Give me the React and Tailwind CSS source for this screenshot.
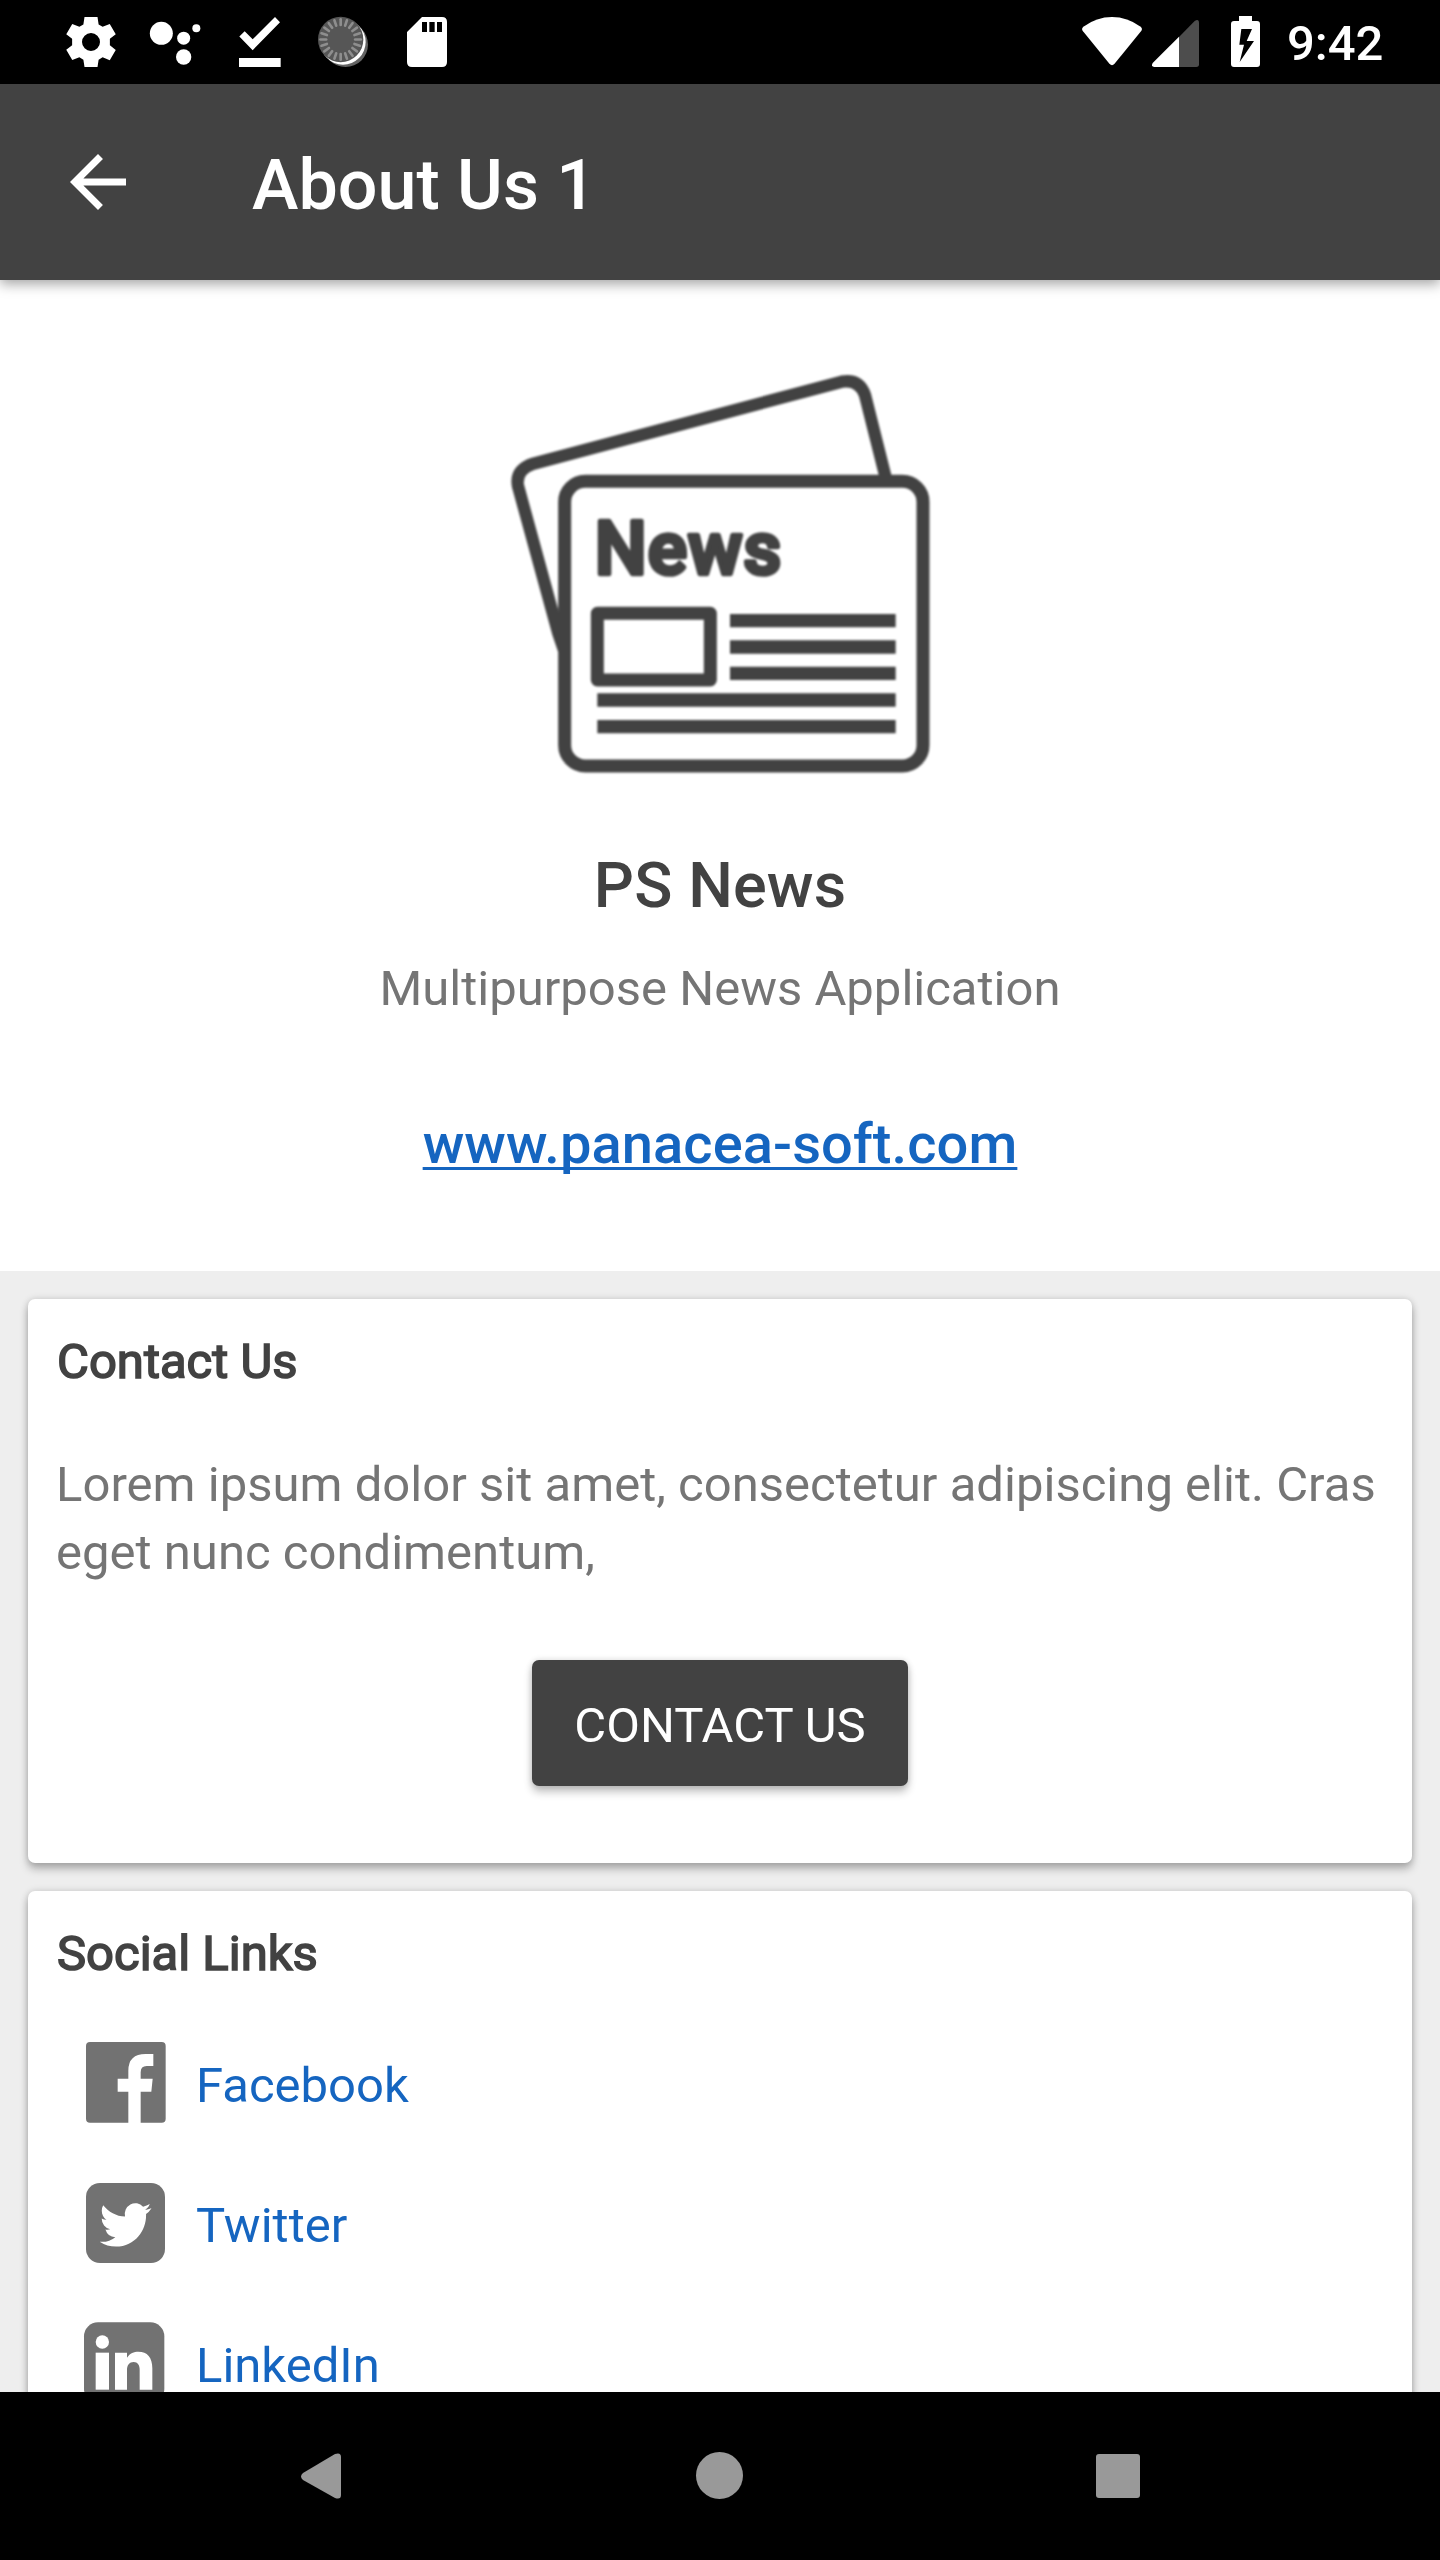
function Gear() {
  return (
    <svg className="size-[60px]" viewBox="0 0 24 24" fill="#fff">
      <path
        fillRule="evenodd"
        d="M9.4 2h5.2l.45 2.95 1.6.95 2.85-1.15 2.4 4.1-2.35 1.85v2.6l2.35 1.85-2.4 4.1-2.85-1.15-1.6.95L14.6 22H9.4l-.45-2.95-1.6-.95-2.85 1.15-2.4-4.1 2.35-1.85v-2.6L2.1 8.85l2.4-4.1L7.35 5.9l1.6-.95zM12 8.4a3.6 3.6 0 100 7.2 3.6 3.6 0 000-7.2z"
      />
    </svg>
  );
}

function Assistant() {
  return (
    <svg className="size-[60px]" viewBox="315 36 180 180" fill="#fff">
      <circle cx="364" cy="100" r="34.5" />
      <circle cx="431" cy="114.500" r="19.500" />
      <circle cx="469" cy="84.500" r="12" />
      <circle cx="431" cy="171" r="23" />
    </svg>
  );
}

function DownloadDone() {
  return (
    <svg className="size-[60px]" viewBox="567 36 180 180" fill="#fff">
      <path d="M598 109.500L614 94l24 24 67-67 15 15.500-82 84zM597 174h125v27H597z" />
    </svg>
  );
}

const ticks = Array.from({ length: 20 }, (_, i) => i * 18);

function Spinner() {
  return (
    <svg className="size-[60px]" viewBox="819 36 180 180">
      <circle cx="916.500" cy="133.500" r="67.500" fill="#636363" />
      <circle cx="909" cy="126" r="68" fill="#fff" />
      <circle cx="902" cy="118.500" r="68" fill="#565656" />
      {ticks.map((a) => (
        <path
          key={a}
          d="M902 75v-17"
          stroke="#8e8e8e"
          strokeWidth="8"
          strokeLinecap="round"
          transform={`rotate(${a} 902 118.500)`}
        />
      ))}
    </svg>
  );
}

function SdCard() {
  return (
    <svg className="size-[60px]" viewBox="1071 36 180 180" fill="#fff">
      <path
        fillRule="evenodd"
        d="M1146 51h60q15 0 15 15v120q0 15-15 15h-90q-15 0-15-15V96zM1146 66v30h15V66zM1168 66v30h16V66zM1191 66v30h15V66z"
      />
    </svg>
  );
}

function Wifi() {
  return (
    <svg className="h-[60px] w-[60px]" viewBox="66 36 180 180" fill="#fff">
      <path d="M70 80Q110 51 156 51T242 80Q249 86 243 94L163 192Q156 199 149 192L69 94Q63 86 70 80z" />
    </svg>
  );
}

function Signal() {
  return (
    <svg className="ml-[10px] h-[60px] w-12" viewBox="276 36 144 180">
      <path d="M357 111L404 63Q417 55 417 70V193Q417 201 409 201H357z" fill="#4d4d4d" />
      <path d="M357 110V201H283Q272 200 278 189z" fill="#fff" />
    </svg>
  );
}

function Battery() {
  return (
    <svg className="ml-[31px] h-[60px] w-[29px]" viewBox="513 36 87 180" fill="#fff">
      <path
        fillRule="evenodd"
        d="M537 48h39v15h15q9 0 9 9v120q0 9-9 9h-69q-9 0-9-9V72q0-9 9-9h15zM544 87l-6 47h14l-13 52 43-63h-22l16-36z"
      />
    </svg>
  );
}

function StatusBar() {
  return (
    <div className="flex h-[84px] items-start bg-black pt-3 pl-[61px]">
      <div className="flex gap-6">
        <Gear />
        <Assistant />
        <DownloadDone />
        <Spinner />
        <SdCard />
      </div>
      <div className="ml-[625px] flex">
        <Wifi />
        <Signal />
        <Battery />
        <span className="ml-[27px] pt-[3px] text-[49px] leading-[58px] font-medium text-white">9:42</span>
      </div>
    </div>
  );
}

function NewsLogo() {
  return (
    <svg
      className="h-[420px] w-[420px] blur-[0.9px]"
      viewBox="60 30 1260 1260"
      fill="none"
      stroke="#424242"
    >
      <path
        d="M1189 390L1125 135Q1108 86 1055 95L130 341Q75 360 84 408L205 850L222 900"
        strokeWidth="37"
      />
      <rect x="224" y="394" width="1075" height="854" rx="62" fill="#fff" strokeWidth="39" />
      <text
        x="314"
        y="671"
        textLength="560"
        lengthAdjust="spacing"
        fontFamily="Roboto, sans-serif"
        fontSize="220"
        fontWeight="500"
        fill="#424242"
        strokeWidth="14"
        strokeLinejoin="round"
      >
        News
      </text>
      <rect x="322" y="790" width="339" height="200" strokeWidth="39" strokeLinejoin="round" />
      <path d="M720 812h497M720 891h497M720 970h497M322 1050h895M322 1130h895" strokeWidth="40" />
    </svg>
  );
}

function FacebookIcon() {
  return (
    <svg className="size-20 overflow-visible" viewBox="258 606 240 240">
      <rect x="258" y="606" width="239" height="242" rx="12" fill="#727272" />
      <path
        d="M385 849V755H353V716H385V692Q385 642 437 642H460V678H440Q422 678 422 697V716H458L454 755H422V849z"
        fill="#fff"
      />
    </svg>
  );
}

function TwitterIcon() {
  return (
    <svg className="size-20 overflow-visible" viewBox="78 96 240 240">
      <rect x="78" y="99" width="237" height="240" rx="42" fill="#727272" />
      <path
        transform="translate(119 144.500) scale(6.460 6.680)"
        fill="#fff"
        d="M23.953 4.570a10 10 0 01-2.825.775 4.958 4.958 0 002.163-2.723c-.951.555-2.005.959-3.127 1.184a4.920 4.920 0 00-8.384 4.482C7.690 8.095 4.067 6.130 1.640 3.162a4.822 4.822 0 00-.666 2.475c0 1.710.870 3.213 2.188 4.096a4.904 4.904 0 01-2.228-.616v.060a4.923 4.923 0 003.946 4.827 4.996 4.996 0 01-2.212.085 4.936 4.936 0 004.604 3.417 9.867 9.867 0 01-6.102 2.105c-.390 0-.779-.023-1.170-.067a13.995 13.995 0 007.557 2.209c9.053 0 13.998-7.496 13.998-13.985 0-.210 0-.420-.015-.630A9.935 9.935 0 0024 4.590z"
      />
    </svg>
  );
}

function LinkedInIcon() {
  return (
    <svg className="size-20 overflow-visible" viewBox="78 516 240 240">
      <rect x="72" y="517" width="241" height="241" rx="42" fill="#727272" />
      <g fill="#fff">
        <circle cx="127" cy="576" r="20" />
        <rect x="107" y="608" width="40" height="111" />
        <path d="M165 608H201V623C210 609 222 605 235 605C262 605 277 622 277 655V719H239V660C239 645 233 636 221 636C208 636 201 645 201 660V719H165z" />
      </g>
    </svg>
  );
}

const links = [
  { name: "Facebook", Icon: FacebookIcon },
  { name: "Twitter", Icon: TwitterIcon },
  { name: "LinkedIn", Icon: LinkedInIcon },
];

function Card({ className, title, children }) {
  return (
    <section
      className={`mx-7 mt-7 rounded-[7px] bg-white px-7 pt-[34px] shadow-[0_6px_8px_rgba(0,0,0,0.26),0_0_7px_rgba(0,0,0,0.15)] ${className}`}
    >
      <h2 className="pl-px text-[49px] leading-[58px] font-normal text-[#424242] [-webkit-text-stroke:1.6px_#424242]">
        {title}
      </h2>
      {children}
    </section>
  );
}

export default function App() {
  return (
    <div className="flex h-[2560px] w-[1440px] flex-col overflow-hidden bg-[#eeeeee] font-[Roboto,sans-serif]">
      <StatusBar />
      <header className="relative z-10 flex h-[196px] shrink-0 items-start bg-[#424242] pl-14 shadow-[0_4px_12px_rgba(0,0,0,0.36)]">
        <svg className="mt-14 size-[84px]" viewBox="0 0 24 24" fill="#fff">
          <path d="M20 11H7.830l5.590-5.590L12 4l-8 8 8 8 1.410-1.410L7.830 13H20z" />
        </svg>
        <h1 className="mt-[60px] ml-28 text-[70px] leading-[82px] font-medium text-white">About Us 1</h1>
      </header>
      <main className="h-[2112px] shrink-0 overflow-hidden">
        <section className="flex h-[991px] flex-col items-center bg-white pt-20">
          <NewsLogo />
          <h2 className="mt-[69px] text-[63px] leading-[74px] font-medium tracking-[0.1px] text-[#424242]">
            PS News
          </h2>
          <p className="mt-[37px] text-[49px] leading-[58px] text-[#757575]">Multipurpose News Application</p>
          <a className="mt-[93px] text-[56px] leading-[66px] font-medium tracking-[0.1px] text-[#1565c0] underline decoration-[3px] underline-offset-[4px] [text-decoration-skip-ink:none]">
            www.panacea-soft.com
          </a>
        </section>
        <Card className="h-[564px]" title="Contact Us">
          <p className="mt-[60px] text-[49px] leading-[68px] tracking-[0.02px] text-[#757575]">
            Lorem ipsum dolor sit amet, consectetur adipiscing elit. Cras eget nunc condimentum,
          </p>
          <button className="mx-auto mt-[73px] flex h-[126px] w-[376px] items-center justify-center rounded-[7px] bg-[#424242] pt-[6px] text-[49px] leading-[58px] text-white shadow-[0_6px_8px_rgba(0,0,0,0.24),0_0_6px_rgba(0,0,0,0.14)]">
            CONTACT US
          </button>
        </Card>
        <Card className="h-[600px]" title="Social Links">
          <ul className="mt-[29px] pl-[30px]">
            {links.map(({ name, Icon }) => (
              <li key={name} className="flex h-[140px] items-center gap-[30px]">
                <Icon />
                <span className="pt-2 text-[49px] leading-[58px] text-[#1565c0]">{name}</span>
              </li>
            ))}
          </ul>
        </Card>
      </main>
      <nav className="flex h-[168px] shrink-0 items-start bg-black pt-[60px] pl-[301px]">
        <svg className="h-[48px] w-[40px]" viewBox="0 0 40 48" fill="#999">
          <path d="M2 21L34 2Q40 0 40 5V43Q40 48 34 46L2 28Q-2 24.500 2 21z" />
        </svg>
        <div className="ml-[355px] size-[47px] rounded-full bg-[#999999]" />
        <div className="mt-[2px] ml-[353px] size-[44px] rounded-[3px] bg-[#999999]" />
      </nav>
    </div>
  );
}
